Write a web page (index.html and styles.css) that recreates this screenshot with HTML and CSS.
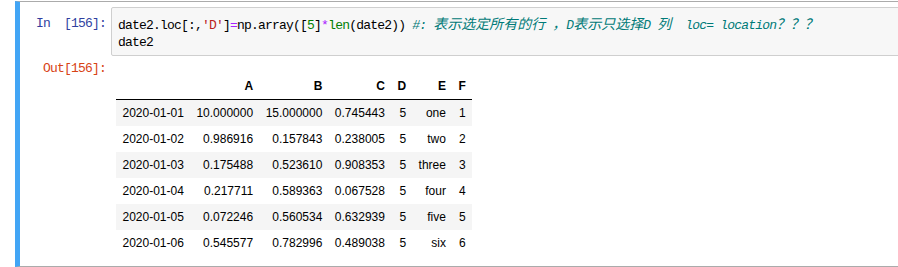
FILE: index.html
```html
<html>
 <head>
  <meta charset="utf-8">
  <link rel="stylesheet" href="styles.css">
 </head>
 <body>
 <div class="cell">
  <div class="inrow">
   <div class="prompt in">In&nbsp;&nbsp;[156]:</div>
   <pre class="code">date2.loc[:,<span class="str">'D'</span>]<span class="op">=</span>np.array([<span class="num">5</span>]<span class="op">*</span><span class="kw">len</span>(date2)) <span class="cm">#: <span class="zh">表示选定所有的行</span> <span class="zh">，</span>D<span class="zh">表示只选择</span>D <span class="zh">列</span>  loc= location<span class="zh">？？？</span></span>
date2</pre>
  </div>
  <div class="outrow">
   <div class="prompt out">Out[156]:</div>
   <div class="result">
    <table class="df">
     <thead>
      <tr><th></th><th>A</th><th>B</th><th>C</th><th>D</th><th>E</th><th>F</th></tr>
     </thead>
     <tbody>
      <tr><th>2020-01-01</th><td>10.000000</td><td>15.000000</td><td>0.745443</td><td>5</td><td>one</td><td>1</td></tr>
      <tr><th>2020-01-02</th><td>0.986916</td><td>0.157843</td><td>0.238005</td><td>5</td><td>two</td><td>2</td></tr>
      <tr><th>2020-01-03</th><td>0.175488</td><td>0.523610</td><td>0.908353</td><td>5</td><td>three</td><td>3</td></tr>
      <tr><th>2020-01-04</th><td>0.217711</td><td>0.589363</td><td>0.067528</td><td>5</td><td>four</td><td>4</td></tr>
      <tr><th>2020-01-05</th><td>0.072246</td><td>0.560534</td><td>0.632939</td><td>5</td><td>five</td><td>5</td></tr>
      <tr><th>2020-01-06</th><td>0.545577</td><td>0.782996</td><td>0.489038</td><td>5</td><td>six</td><td>6</td></tr>
     </tbody>
    </table>
   </div>
  </div>
 </div>
 </body>
</html>
```

FILE: styles.css
```css
body{
  margin: 0;
  padding-top: 1px;
  background: #fff;
  overflow: hidden;
}
.cell{
  margin-left: 15px;
  width: 920px;
  border-top: 1px solid #ababab;
  border-bottom: 1px solid #ababab;
  border-left: 5px solid #42a5f5;
  padding: 5px 0 11px 0;
  box-sizing: border-box;
  height: 266px;
}
.inrow, .outrow{
  display: flex;
  align-items: flex-start;
}
.prompt{
  width: 91px;
  flex: none;
  text-align: right;
  font-family: "Liberation Mono", monospace;
  font-size: 13px;
  letter-spacing: -0.8px;
  line-height: 17px;
  padding-right: 5px;
  box-sizing: border-box;
}
.in{
  color: #303f9f;
  padding-top: 8px;
}
.out{
  color: #d84315;
  padding-top: 1px;
}
.code{
  flex: 1;
  margin: 0;
  padding: 7px 6px 4px 6px;
  background: #f7f7f7;
  border: 1px solid #cfcfcf;
  border-radius: 2px;
  font-family: "Liberation Mono", "Noto Sans CJK SC", monospace;
  font-size: 13px;
  letter-spacing: -0.8px;
  line-height: 17px;
  color: #000;
}
.str{ color: #ba2121; }
.op{ color: #aa22ff; }
.num{ color: #008000; }
.kw{ color: #008000; }
.cm{
  color: #007a78;
  font-style: italic;
}
.zh{
  font-family: "Noto Sans CJK SC", sans-serif;
  font-size: 14px;
  letter-spacing: 0;
}
.outrow{
  margin-top: 3px;
}
.result{
  padding-left: 5px;
  padding-top: 14px;
}
.df{
  border-collapse: collapse;
  border-spacing: 0;
  font-family: "Liberation Sans", Arial, sans-serif;
  font-size: 12px;
  color: #000;
}
.df th, .df td{
  text-align: right;
  vertical-align: middle;
  padding: 6px 6px 6px 6.5px;
  line-height: 14px;
  white-space: nowrap;
}
.df thead th{
  font-weight: bold;
}
.df thead{
  border-bottom: 1px solid #000;
}
.df tbody th{
  font-weight: normal;
}
.df tbody tr:nth-child(odd){
  background: #f5f5f5;
}
```
